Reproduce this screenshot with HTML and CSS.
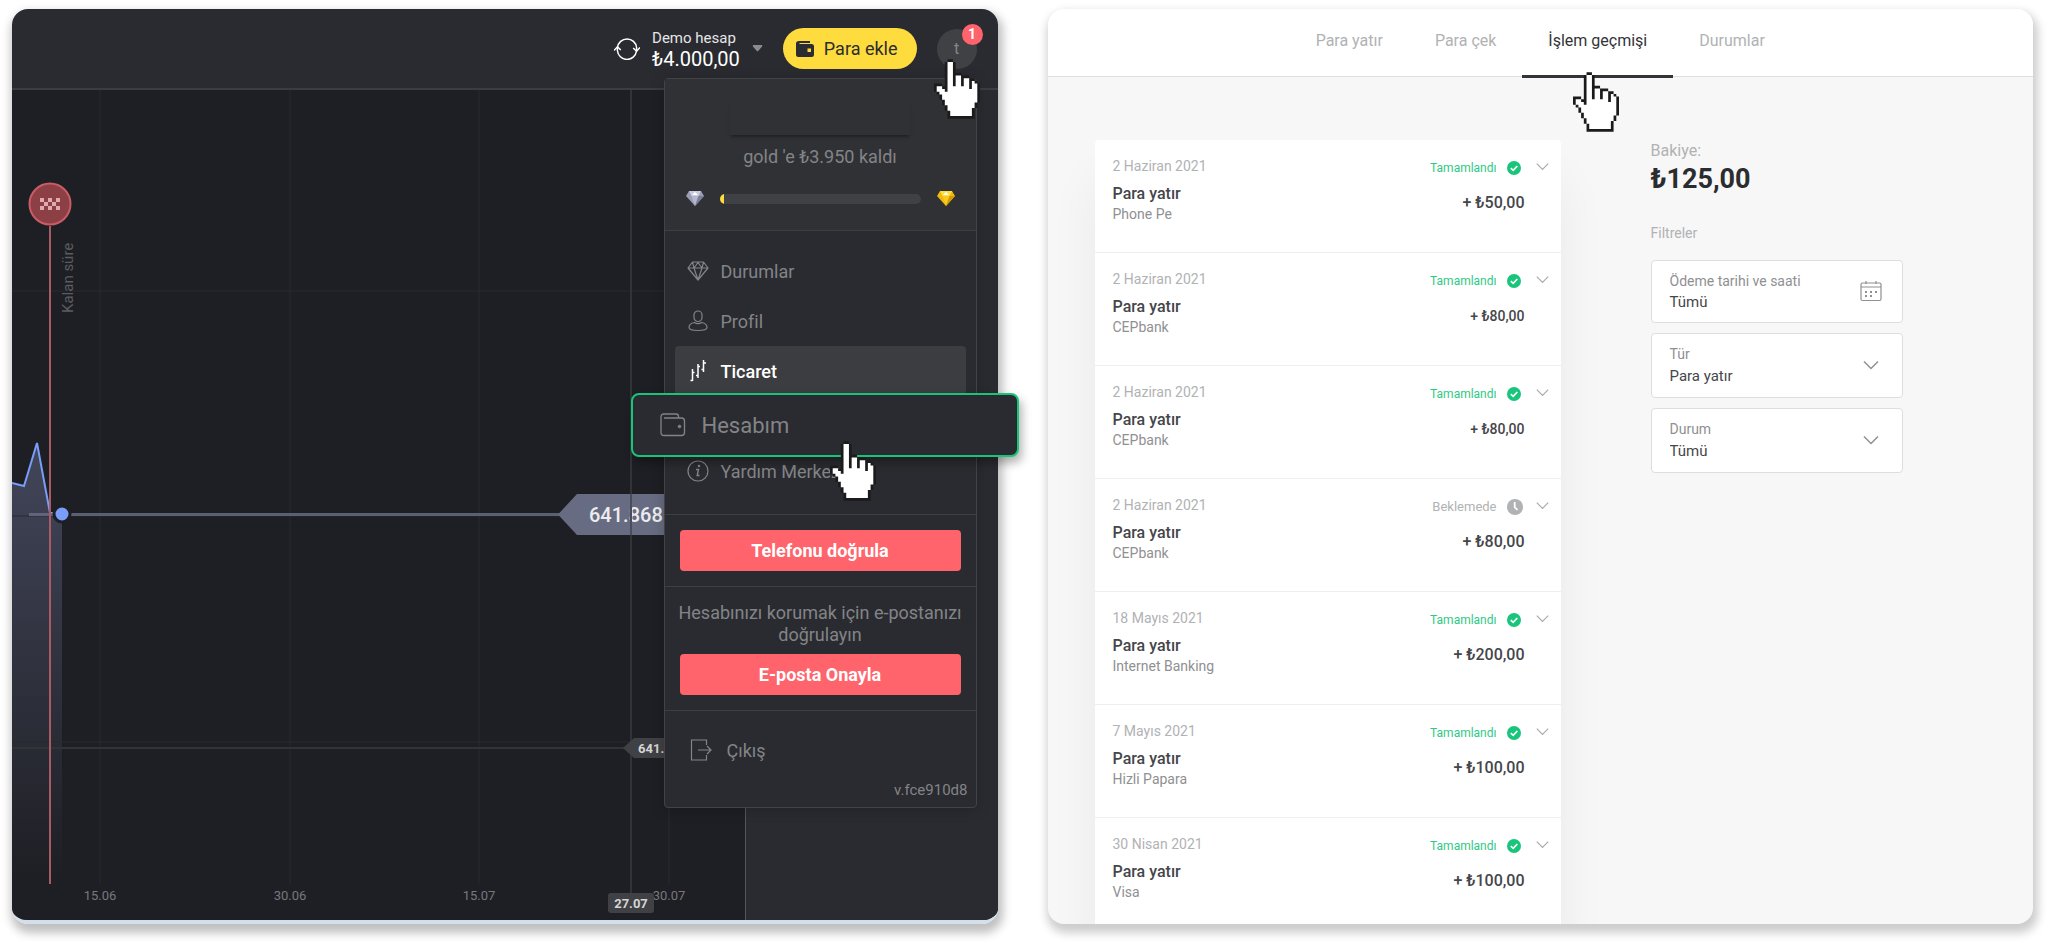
FILE: index.html
```html
<!DOCTYPE html>
<html lang="tr">
<head>
<meta charset="utf-8">
<meta name="viewport" content="width=device-width, initial-scale=1">
<title>Hesabım – İşlem geçmişi</title>
<link rel="stylesheet" href="styles.css">
</head>
<body>
<svg class="defs" aria-hidden="true">
  <defs>
    <symbol id="hand" viewBox="0 0 17 22">
      <path fill="#1b1b1d" d="M5 0H7V1H8V5H10V6H13V7H15V8H16V9H17V16H16V18H15V22H5V19H4V17H3V15H2V13H1V12H0V9H3V10H4V1H5Z"/>
      <path fill="#fff" d="M5 1H7V10H8V6H10V10H11V7H13V11H14V8H15V9H16V16H15V18H14V21H6V19H5V17H4V15H3V13H2V12H1V10H3V11H4V12H5Z"/>
    </symbol>
    <symbol id="chevron" viewBox="0 0 16 16">
      <path d="M1 4.5 8 11.500 15 4.500" fill="none" stroke="currentColor" stroke-width="1.500"/>
    </symbol>
    <symbol id="done" viewBox="0 0 14 14">
      <circle cx="7" cy="7" r="7" fill="#19c57a"/>
      <path d="M3.800 7.200 6.200 9.400 10.300 5" fill="none" stroke="#fff" stroke-width="1.700"/>
    </symbol>
    <symbol id="waiting" viewBox="0 0 16 16">
      <circle cx="8" cy="8" r="8" fill="#b1b2b4"/>
      <path d="M7.700 3V8.200L10.500 11" fill="none" stroke="#fff" stroke-width="1.700"/>
    </symbol>
    <symbol id="gem" viewBox="0 0 22 20">
      <path d="M5.500 1H16.500L21 7 11 19 1 7ZM1 7H21M5.500 1 7 7 11 19 15 7 16.500 1M7 7 11 1.500 15 7" fill="none" stroke="currentColor" stroke-width="1.200" stroke-linejoin="round"/>
    </symbol>
  </defs>
</svg>

<section class="trading">
  <div class="trading__frame">
    <header class="topbar">
      <button class="account" type="button">
        <svg class="account__swap" viewBox="0 0 26 22" fill="none" stroke="#fff" stroke-width="1.500">
          <path d="M3.500 9.500A9.600 9.600 0 0 1 22.600 9.500V12.500M22.500 13A9.600 9.600 0 0 1 3.400 12.500V9.500"/>
          <path d="M0 12.500 3.400 8.800 6.800 12M19.200 10 22.600 13.200 26 9.500" />
        </svg>
        <span class="account__text">
          <span class="account__name">Demo hesap</span>
          <span class="account__sum">₺4.000,00</span>
        </span>
        <svg class="account__caret" viewBox="0 0 12 8"><path d="M1 0H11Q12 1 11 2L6.500 7Q6 7.500 5.500 7L1 2Q0 1 1 0Z" fill="#8a8b8e"/></svg>
      </button>
      <button class="deposit" type="button">
        <svg class="deposit__icon" viewBox="0 0 18 16" fill="#2b2c2f">
          <path d="M3 0H14V2H3.500V3H15.500Q18 3 18 5.500V13.500Q18 16 15.500 16H2.500Q0 16 0 13.500V2.500Q0 0 3 0ZM11.500 7.500V11H15V7.500Z"/>
        </svg>
        Para ekle
      </button>
      <button class="avatar" type="button">t<span class="avatar__badge">1</span></button>
    </header>
    <div class="workspace">
      <svg class="chart" role="img" aria-label="Fiyat grafiği">
        <defs>
          <linearGradient id="area" x1="0" y1="0" x2="0" y2="1">
            <stop offset="0" stop-color="#42465a"/>
            <stop offset=".5" stop-color="#30323f"/>
            <stop offset="1" stop-color="#1e1f24"/>
          </linearGradient>
        </defs>
        <path d="M0 393 12 396 25 353 38 423 50 424V790H0Z" fill="url(#area)"/>
        <path class="chart__grid" d="M88 0V794M278 0V794M467 0V794M657 0V794M0 201H733M0 426H733M0 652H733"/>
        <path class="chart__cross" d="M619 0V804M0 658H620"/>
        <path d="M0 393 12 396 25 353 38 423H42" class="chart__line"/>
        <path d="M17 424.500H547" stroke="#6a6f88" stroke-width="3" opacity=".8"/>
        <path d="M38 136V794" stroke="#a85b62" stroke-width="2"/>
        <circle cx="38" cy="114" r="20.500" fill="#8d3f46" stroke="#c95c64" stroke-width="2"/>
        <path fill="#dfa9ad" d="M28 108h4v4h-4zM36 108h4v4h-4zM44 108h4v4h-4zM32 112h4v4h-4zM40 112h4v4h-4zM28 116h4v4h-4zM36 116h4v4h-4zM44 116h4v4h-4z"/>
        <text class="chart__note" transform="translate(61 223) rotate(-90)">Kalan süre</text>
        <circle cx="50" cy="424" r="8" fill="#7a9dfa" stroke="#1e1f24" stroke-width="3"/>
        <path d="M546 424.500 565 404H733V445H565Z" fill="#676c82"/>
        <text class="chart__price" x="577" y="432">641.868</text>
        <path d="M619 404V445" stroke="#4b4e5a" stroke-width="2"/>
        <path d="M611 658 622 648H733V668H622Z" fill="#404145"/>
        <text class="chart__mark" x="626" y="663">641.562</text>
        <text class="chart__date" x="88" y="810">15.06</text>
        <text class="chart__date" x="278" y="810">30.06</text>
        <text class="chart__date" x="467" y="810">15.07</text>
        <text class="chart__date" x="657" y="810">30.07</text>
        <rect x="596" y="803" width="46" height="20" rx="3" fill="#404145"/>
        <text class="chart__mark chart__mark--center" x="619" y="818">27.07</text>
      </svg>
      <div class="sidebar"></div>
    </div>
  </div>

  <aside class="menu">
    <div class="status">
      <div class="status__name"></div>
      <p class="status__left">gold 'e ₺3.950 kaldı</p>
      <div class="status__row">
        <svg class="status__gem" viewBox="0 0 18 15"><path d="M3 0H15L18 5 9 15 0 5Z" fill="#9a9db5"/><path d="M3 0H15L12.500 5H5.500Z" fill="#c9cbdd"/><path d="M6 4 9 1 12 4Z" fill="#fff"/><path d="M5.500 5H12.500L9 15Z" fill="#b4b7cd"/><path d="M12.500 5H18L9 15Z" fill="#7b7e98"/></svg>
        <div class="status__bar"><div class="status__fill"></div></div>
        <svg class="status__gem" viewBox="0 0 18 15"><path d="M3 0H15L18 5 9 15 0 5Z" fill="#f0b90f"/><path d="M3 0H15L12.500 5H5.500Z" fill="#ffdf3c"/><path d="M6 4 9 1 12 4Z" fill="#fff"/><path d="M5.500 5H12.500L9 15Z" fill="#f9cb1d"/><path d="M12.500 5H18L9 15Z" fill="#d39a08"/></svg>
      </div>
    </div>
    <nav class="menu__nav">
      <a class="menu__item" href="#"><svg class="menu__icon"><use href="#gem"/></svg>Durumlar</a>
      <a class="menu__item" href="#"><svg class="menu__icon" viewBox="0 0 22 22" fill="none" stroke="currentColor" stroke-width="1.200"><rect x="7" y="1" width="8" height="10.500" rx="4"/><path d="M7.500 12.500Q2 13.500 2 17.500Q2 20.500 11 20.500T20 17.500Q20 13.500 14.500 12.500Q11 14.800 7.500 12.500Z"/></svg>Profil</a>
      <a class="menu__item menu__item--active" href="#"><svg class="menu__icon" viewBox="0 0 22 22" fill="none" stroke="currentColor" stroke-width="1.500"><path d="M5.500 9V21M3.500 20.500H5.500M5.500 12.500H7.500M11 4V18M9 15.500H11M11 6.500H13M16.500 0V12M14.500 9.500H16.500M16.500 3H19"/></svg>Ticaret</a>
      <div class="menu__slot">
        <a class="menu__pop" href="#"><svg class="menu__pop-icon" viewBox="0 0 26 24" fill="none" stroke="currentColor" stroke-width="1.300"><path d="M4 5H21.500Q24.500 5 24.500 8V19.500Q24.500 22.500 21.500 22.500H4Q1 22.500 1 19.500V4Q1 1 4 1H16Q18.500 1 18.500 3.500V5"/><circle cx="19.500" cy="13.500" r="1.300" fill="currentColor" stroke-width="1"/></svg>Hesabım<svg class="hand hand--account"><use href="#hand"/></svg></a>
      </div>
      <a class="menu__item" href="#"><svg class="menu__icon" viewBox="0 0 22 22" fill="none" stroke="currentColor" stroke-width="1.200"><circle cx="11" cy="11" r="10"/><path d="M9 9.500H11.500L10.200 15.500H12.500" stroke-width="1.400"/><circle cx="12" cy="6" r=".7" fill="currentColor"/></svg>Yardım Merkezi</a>
    </nav>
    <div class="verify"><button class="verify__button" type="button">Telefonu doğrula</button></div>
    <div class="verify">
      <p class="verify__text">Hesabınızı korumak için e-postanızı doğrulayın</p>
      <button class="verify__button" type="button">E-posta Onayla</button>
    </div>
    <div class="menu__foot">
      <a class="menu__exit" href="#"><svg class="menu__icon" viewBox="0 0 22 22" fill="none" stroke="currentColor" stroke-width="1.200"><path d="M16.500 6V1H1.500V21H16.500V16M8 11H21M17 7 21 11 17 15"/></svg>Çıkış</a>
      <p class="menu__version">v.fce910d8</p>
    </div>
  </aside>
  <svg class="hand hand--avatar"><use href="#hand"/></svg>
</section>

<section class="cashier">
  <nav class="tabs">
    <a class="tabs__item" href="#">Para yatır</a>
    <a class="tabs__item" href="#">Para çek</a>
    <a class="tabs__item tabs__item--active" href="#" aria-current="page">İşlem geçmişi<svg class="hand hand--tab"><use href="#hand"/></svg></a>
    <a class="tabs__item" href="#">Durumlar</a>
  </nav>
  <div class="cashier__body">
    <ul class="history">
      <li class="entry">
        <div class="entry__info"><time class="entry__date">2 Haziran 2021</time><h3 class="entry__title">Para yatır</h3><p class="entry__method">Phone Pe</p></div>
        <div class="entry__side"><p class="entry__state">Tamamlandı<svg class="entry__mark"><use href="#done"/></svg></p><p class="entry__sum">+ ₺50,00</p></div>
        <button class="entry__toggle" type="button" aria-label="Ayrıntılar"><svg class="entry__chevron"><use href="#chevron"/></svg></button>
      </li>
      <li class="entry">
        <div class="entry__info"><time class="entry__date">2 Haziran 2021</time><h3 class="entry__title">Para yatır</h3><p class="entry__method">CEPbank</p></div>
        <div class="entry__side"><p class="entry__state">Tamamlandı<svg class="entry__mark"><use href="#done"/></svg></p><p class="entry__sum entry__sum--small">+ ₺80,00</p></div>
        <button class="entry__toggle" type="button" aria-label="Ayrıntılar"><svg class="entry__chevron"><use href="#chevron"/></svg></button>
      </li>
      <li class="entry">
        <div class="entry__info"><time class="entry__date">2 Haziran 2021</time><h3 class="entry__title">Para yatır</h3><p class="entry__method">CEPbank</p></div>
        <div class="entry__side"><p class="entry__state">Tamamlandı<svg class="entry__mark"><use href="#done"/></svg></p><p class="entry__sum entry__sum--small">+ ₺80,00</p></div>
        <button class="entry__toggle" type="button" aria-label="Ayrıntılar"><svg class="entry__chevron"><use href="#chevron"/></svg></button>
      </li>
      <li class="entry">
        <div class="entry__info"><time class="entry__date">2 Haziran 2021</time><h3 class="entry__title">Para yatır</h3><p class="entry__method">CEPbank</p></div>
        <div class="entry__side"><p class="entry__state entry__state--waiting">Beklemede<svg class="entry__mark"><use href="#waiting"/></svg></p><p class="entry__sum">+ ₺80,00</p></div>
        <button class="entry__toggle" type="button" aria-label="Ayrıntılar"><svg class="entry__chevron"><use href="#chevron"/></svg></button>
      </li>
      <li class="entry">
        <div class="entry__info"><time class="entry__date">18 Mayıs 2021</time><h3 class="entry__title">Para yatır</h3><p class="entry__method">Internet Banking</p></div>
        <div class="entry__side"><p class="entry__state">Tamamlandı<svg class="entry__mark"><use href="#done"/></svg></p><p class="entry__sum">+ ₺200,00</p></div>
        <button class="entry__toggle" type="button" aria-label="Ayrıntılar"><svg class="entry__chevron"><use href="#chevron"/></svg></button>
      </li>
      <li class="entry">
        <div class="entry__info"><time class="entry__date">7 Mayıs 2021</time><h3 class="entry__title">Para yatır</h3><p class="entry__method">Hizli Papara</p></div>
        <div class="entry__side"><p class="entry__state">Tamamlandı<svg class="entry__mark"><use href="#done"/></svg></p><p class="entry__sum">+ ₺100,00</p></div>
        <button class="entry__toggle" type="button" aria-label="Ayrıntılar"><svg class="entry__chevron"><use href="#chevron"/></svg></button>
      </li>
      <li class="entry">
        <div class="entry__info"><time class="entry__date">30 Nisan 2021</time><h3 class="entry__title">Para yatır</h3><p class="entry__method">Visa</p></div>
        <div class="entry__side"><p class="entry__state">Tamamlandı<svg class="entry__mark"><use href="#done"/></svg></p><p class="entry__sum">+ ₺100,00</p></div>
        <button class="entry__toggle" type="button" aria-label="Ayrıntılar"><svg class="entry__chevron"><use href="#chevron"/></svg></button>
      </li>
    </ul>

    <aside class="filters">
      <p class="filters__label">Bakiye:</p>
      <p class="filters__balance">₺125,00</p>
      <p class="filters__heading">Filtreler</p>
      <div class="filters__list">
        <button class="field field--date" type="button">
          <span class="field__label">Ödeme tarihi ve saati</span>
          <span class="field__value">Tümü</span>
          <svg class="field__icon field__icon--calendar" viewBox="0 0 22 22" fill="none" stroke="#8f9092" stroke-width="1.200"><rect x="1" y="3" width="20" height="17.500" rx="1.500"/><path d="M1 7H21M6 1V4M16 1V4" /><path d="M5 12H7M10 12H12M15 12H17M5 16H7M10 16H12" stroke-width="2"/></svg>
        </button>
        <div class="field">
          <label class="field__label" for="type">Tür</label>
          <select class="field__value" id="type"><option>Para yatır</option></select>
          <svg class="field__icon"><use href="#chevron"/></svg>
        </div>
        <div class="field">
          <label class="field__label" for="state">Durum</label>
          <select class="field__value" id="state"><option>Tümü</option></select>
          <svg class="field__icon"><use href="#chevron"/></svg>
        </div>
      </div>
    </aside>
  </div>
</section>
</body>
</html>
```

FILE: styles.css
```css
* {
  box-sizing: border-box;
}

body {
  margin: 0;
  min-height: 100vh;
  padding: 9px 15px 18px 12px;
  display: grid;
  grid-template-columns: 1fr 1fr;
  gap: 50px;
  background: #fff;
  font-family: Roboto, "Liberation Sans", sans-serif;
  font-size: 16px;
}

p, h3, ul {
  margin: 0;
  padding: 0;
}

a {
  color: inherit;
  text-decoration: none;
}

button, select {
  margin: 0;
  padding: 0;
  border: 0;
  background: none;
  color: inherit;
  font: inherit;
  text-align: left;
}

.defs {
  position: absolute;
  width: 0;
  height: 0;
}

.hand {
  position: absolute;
  width: 46px;
  height: 60px;
  z-index: 3;
}

/* Trading room */
.trading {
  position: relative;
  display: flex;
  border-radius: 16px;
  box-shadow: 2px 6px 10px 3px rgba(0, 0, 0, .25);
}

.trading__frame {
  flex: 1;
  min-width: 0;
  display: flex;
  flex-direction: column;
  overflow: hidden;
  border-bottom: 4px solid #d3dfeb;
  border-radius: 16px;
  background: #2a2b30;
}

.topbar {
  display: flex;
  align-items: center;
  justify-content: flex-end;
  gap: 20px;
  height: 81px;
  padding-right: 21px;
  border-bottom: 2px solid #3c3d41;
}

.account {
  display: flex;
  align-items: center;
  gap: 12px;
  color: #fff;
}

.account__swap {
  width: 26px;
  height: 22px;
}

.account__text {
  display: grid;
}

.account__name {
  font-size: 15px;
  line-height: 20px;
  color: #e6e6e7;
}

.account__sum {
  font-size: 20px;
  line-height: 22px;
}

.account__caret {
  width: 11px;
  height: 7px;
}

.deposit {
  display: flex;
  align-items: center;
  justify-content: center;
  gap: 10px;
  height: 41px;
  padding: 0 19px 0 13px;
  border-radius: 21px;
  background: #ffdc3d;
  color: #2b2c2f;
  font-size: 18px;
}

.deposit__icon {
  width: 18px;
  height: 16px;
}

.avatar {
  position: relative;
  width: 40px;
  height: 40px;
  border-radius: 50%;
  background: #404145;
  color: #85868a;
  text-align: center;
}

.avatar__badge {
  position: absolute;
  top: -5px;
  right: -6px;
  width: 21px;
  height: 21px;
  border-radius: 50%;
  background: #ff636b;
  color: #fff;
  font-size: 14px;
  font-weight: 700;
  line-height: 21px;
}

.hand--avatar {
  top: 50px;
  right: 18px;
}

.workspace {
  flex: 1;
  display: flex;
  background: #1e1f24;
}

.chart {
  flex: 1;
  min-width: 0;
  height: 100%;
}

.sidebar {
  width: 253px;
  border-left: 1px solid #55565a;
  background: #2a2b30;
}

.chart__grid {
  fill: none;
  stroke: #292a2e;
}

.chart__cross {
  fill: none;
  stroke: #323337;
  stroke-width: 2;
}

.chart__line {
  fill: none;
  stroke: #7a9dfa;
  stroke-width: 2;
}

.chart__note {
  fill: #5c5d60;
  font-size: 15px;
}

.chart__price {
  fill: #ececf0;
  font-size: 20px;
  font-weight: 500;
}

.chart__mark {
  fill: #d5d5d6;
  font-size: 13px;
  font-weight: 700;
}

.chart__mark--center {
  text-anchor: middle;
}

.chart__date {
  fill: #77787b;
  font-size: 13px;
  text-anchor: middle;
}

/* Profile menu */
.menu {
  position: absolute;
  top: 69px;
  right: 21px;
  width: 313px;
  border: 1px solid #424347;
  border-radius: 4px;
  background: #2a2b30;
  color: #838487;
  font-size: 18px;
  box-shadow: 0 2px 14px rgba(0, 0, 0, .2);
}

.status {
  display: flex;
  flex-direction: column;
  align-items: center;
  padding: 21px 21px 24px;
  border-bottom: 1px solid #3e3f43;
  background: #303135;
}

.status__name {
  width: 180px;
  height: 35px;
  background: #303135;
  box-shadow: 0 3px 3px -1px rgba(0, 0, 0, .35);
}

.status__left {
  margin-top: 10px;
  line-height: 24px;
}

.status__row {
  align-self: stretch;
  display: flex;
  align-items: center;
  gap: 16px;
  margin-top: 22px;
}

.status__gem {
  width: 18px;
  height: 15px;
}

.status__bar {
  flex: 1;
  height: 10px;
  overflow: hidden;
  border-radius: 5px;
  background: #404145;
}

.status__fill {
  width: 4px;
  height: 100%;
  background: #ffdc3d;
}

.menu__nav {
  padding: 15px 10px 18px;
  border-bottom: 1px solid #3e3f43;
}

.menu__item {
  display: flex;
  align-items: center;
  gap: 12px;
  height: 50px;
  padding-left: 12px;
  border-radius: 4px;
}

.menu__item--active {
  background: #3c3d40;
  color: #fff;
  font-weight: 500;
}

.menu__icon {
  width: 22px;
  height: 22px;
}

.menu__slot {
  position: relative;
  height: 50px;
}

.menu__pop {
  position: absolute;
  top: -3px;
  left: -44px;
  right: -53px;
  z-index: 2;
  display: flex;
  align-items: center;
  gap: 16px;
  height: 64px;
  padding-left: 27px;
  border: 2px solid #18c47a;
  border-radius: 8px;
  background: #2a2b30;
  font-size: 22px;
  box-shadow: 3px 6px 10px rgba(0, 0, 0, .3);
}

.menu__pop-icon {
  width: 26px;
  height: 24px;
}

.hand--account {
  top: 46px;
  right: 141px;
}

.verify {
  padding: 15px;
  border-bottom: 1px solid #3e3f43;
  text-align: center;
}

.verify__text {
  margin: 0 -8px 8px;
  line-height: 22px;
}

.verify__button {
  display: block;
  width: 100%;
  height: 41px;
  border-radius: 4px;
  background: #ff636b;
  color: #fff;
  font-weight: 700;
  text-align: center;
}

.menu__foot {
  padding: 14px 8px 6px 25px;
}

.menu__exit {
  display: flex;
  align-items: center;
  gap: 15px;
  height: 50px;
}

.menu__version {
  margin-top: 4px;
  font-size: 15px;
  line-height: 22px;
  text-align: right;
}

/* Cashier */
.cashier {
  overflow: hidden;
  border-radius: 16px;
  background: #f7f7f7;
  box-shadow: 2px 6px 10px 3px rgba(0, 0, 0, .2);
}

.tabs {
  display: flex;
  justify-content: center;
  height: 68px;
  border-bottom: 1px solid #dededf;
  background: #fff;
  color: #b1b2b4;
}

.tabs__item {
  position: relative;
  height: 69px;
  padding: 0 26px;
  line-height: 64px;
}

.tabs__item--active {
  border-bottom: 3px solid #333438;
  color: #333438;
}

.hand--tab {
  top: 63px;
  left: 51px;
}

.cashier__body {
  display: grid;
  grid-template-columns: 466px 252px;
  gap: 90px;
  padding: 63px 47px 0;
}

.history {
  border-radius: 4px 4px 0 0;
  background: #fff;
  box-shadow: 0 40px 50px rgba(0, 0, 0, .06);
  list-style: none;
}

.entry {
  display: flex;
  align-items: flex-start;
  padding: 16px 0 28px 18px;
  border-bottom: 1px solid #eeeeef;
}

.entry:last-child {
  padding-bottom: 22px;
  border-bottom: 0;
}

.entry__info {
  flex: 1;
}

.entry__date {
  display: block;
  color: #b1b2b4;
  font-size: 14px;
  line-height: 20px;
}

.entry__title {
  margin-top: 8px;
  color: #45464a;
  font-size: 16px;
  font-weight: 500;
  line-height: 20px;
}

.entry__method {
  color: #8f9092;
  font-size: 14px;
  line-height: 20px;
}

.entry__side {
  text-align: right;
}

.entry__state {
  display: flex;
  align-items: center;
  justify-content: flex-end;
  gap: 10px;
  padding-right: 4px;
  color: #2fc985;
  font-size: 12px;
  line-height: 24px;
}

.entry__state--waiting {
  padding-right: 2px;
  color: #b1b2b4;
  font-size: 13px;
}

.entry__mark {
  width: 14px;
  height: 14px;
}

.entry__state--waiting .entry__mark {
  width: 16px;
  height: 16px;
}

.entry__sum {
  margin-top: 13px;
  color: #45464a;
  font-size: 16px;
  font-weight: 500;
  line-height: 20px;
}

.entry__sum--small {
  font-size: 14px;
}

.entry__toggle {
  display: grid;
  place-items: center;
  width: 36px;
  height: 20px;
  color: #a9aaac;
}

.entry__chevron {
  width: 13px;
  height: 13px;
}

.filters {
  color: #b1b2b4;
}

.filters__label {
  line-height: 22px;
}

.filters__balance {
  color: #2b2c2f;
  font-size: 27px;
  font-weight: 700;
  line-height: 34px;
}

.filters__heading {
  margin-top: 27px;
  font-size: 14px;
  line-height: 20px;
}

.filters__list {
  display: grid;
  gap: 10px;
  margin-top: 17px;
}

.field {
  display: grid;
  grid-template-columns: 1fr 22px;
  grid-template-rows: 22px 22px;
  align-items: center;
  padding: 9px 20px 10px 18px;
  border: 1px solid #dededf;
  border-radius: 4px;
  background: #fff;
}

.field--date {
  grid-template-rows: 22px 20px;
}

.field__label {
  grid-area: 1 / 1;
  color: #8f9092;
  font-size: 14px;
}

.field__value {
  grid-area: 2 / 1 / 3 / 3;
  color: #45464a;
  font-size: 15px;
  appearance: none;
}

.field__icon {
  grid-area: 1 / 2 / 3 / 3;
  justify-self: center;
  width: 16px;
  height: 16px;
  color: #8f9092;
  pointer-events: none;
}

.field__icon--calendar {
  width: 22px;
  height: 22px;
}
```
